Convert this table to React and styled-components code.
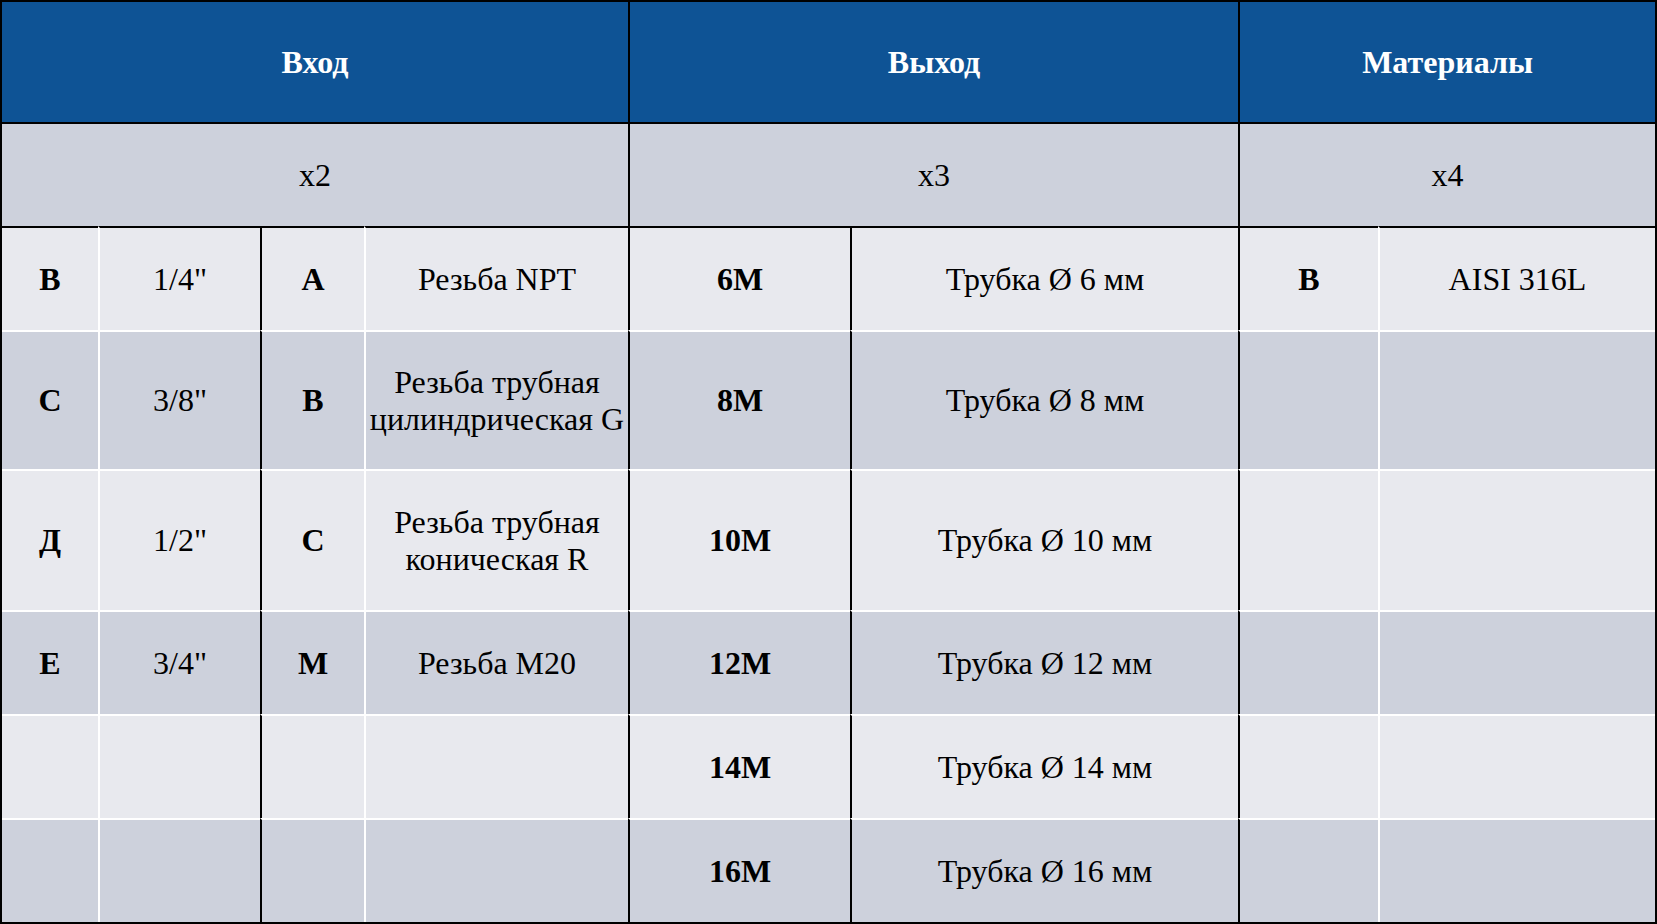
import React from "react";
import styled, { createGlobalStyle } from "styled-components";

const GlobalStyle = createGlobalStyle`
  html, body {
    margin: 0;
    padding: 0;
    background: #ffffff;
  }
  body {
    font-family: "Liberation Serif", "Times New Roman", serif;
  }
`;

// widths include the 2px left line of each column
const COLUMNS = [96, 162, 104, 264, 222, 388, 140, 277];
const ROW_HEIGHTS = [120, 104, 104, 139, 141, 104, 104, 104];
const COL_LINES = [null, "#ffffff", "#000000", "#ffffff", "#000000", "#000000", "#000000", "#ffffff"];
const BOLD_COLS = [0, 2, 4, 6];

const LIGHT = "#e8e9ee";
const DARK = "#cdd1dc";

const rows = [
  ["В", "1/4\"", "А", "Резьба NPT", "6M", "Трубка Ø 6 мм", "В", "AISI 316L"],
  ["С", "3/8\"", "В", ["Резьба трубная", "цилиндрическая G"], "8M", "Трубка Ø 8 мм", "", ""],
  ["Д", "1/2\"", "С", ["Резьба трубная", "коническая R"], "10M", "Трубка Ø 10 мм", "", ""],
  ["Е", "3/4\"", "М", "Резьба М20", "12M", "Трубка Ø 12 мм", "", ""],
  ["", "", "", "", "14M", "Трубка Ø 14 мм", "", ""],
  ["", "", "", "", "16M", "Трубка Ø 16 мм", "", ""],
];

const groups = [
  { title: "Вход", count: "x2", span: 4 },
  { title: "Выход", count: "x3", span: 2 },
  { title: "Материалы", count: "x4", span: 2 },
];

const App = () => {
  return (
    <>
      <GlobalStyle />
      <Table>
        {groups.map((g, i) => (
          <HeadCell key={g.title} $span={g.span} $left={i > 0 ? "#000000" : null}>
            {g.title}
          </HeadCell>
        ))}
        {groups.map((g, i) => (
          <Cell
            key={g.count}
            $span={g.span}
            $bg={DARK}
            $top="#000000"
            $left={i > 0 ? "#000000" : null}
          >
            {g.count}
          </Cell>
        ))}
        {rows.map((row, r) =>
          row.map((value, c) => (
            <Cell
              key={r + "-" + c}
              $bg={r % 2 === 0 ? LIGHT : DARK}
              $top={r === 0 ? "#000000" : "#ffffff"}
              $left={COL_LINES[c]}
              $bold={BOLD_COLS.includes(c)}
            >
              {Array.isArray(value) ? (
                <Lines>
                  {value.map((line) => (
                    <span key={line}>{line}</span>
                  ))}
                </Lines>
              ) : (
                value
              )}
            </Cell>
          ))
        )}
      </Table>
    </>
  );
};

export default App;

const Table = styled.div`
  display: grid;
  grid-template-columns: ${COLUMNS.map((w) => w + "px").join(" ")};
  grid-template-rows: ${ROW_HEIGHTS.map((h) => h + "px").join(" ")};
  width: 1657px;
  height: 924px;
  box-sizing: border-box;
  border: 2px solid #000000;
  background: #000000;
`;

const Cell = styled.div`
  grid-column: span ${(p) => p.$span || 1};
  box-sizing: border-box;
  display: flex;
  align-items: center;
  justify-content: center;
  text-align: center;
  background: ${(p) => p.$bg};
  border-top: ${(p) => (p.$top ? `2px solid ${p.$top}` : "none")};
  border-left: ${(p) => (p.$left ? `2px solid ${p.$left}` : "none")};
  color: #000000;
  font-size: 32px;
  line-height: 1.15;
  font-weight: ${(p) => (p.$bold ? 700 : 400)};
  white-space: nowrap;
`;

const HeadCell = styled(Cell)`
  background: #0e5395;
  color: #ffffff;
  font-weight: 700;
`;

const Lines = styled.div`
  display: flex;
  flex-direction: column;
  align-items: center;
`;
